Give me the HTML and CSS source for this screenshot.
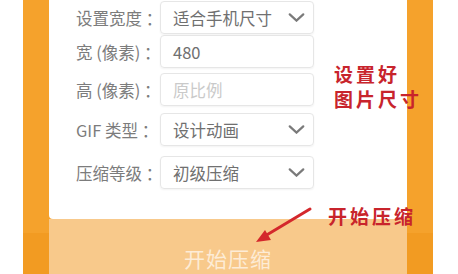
FILE: index.html
```html
<!DOCTYPE html>
<html lang="zh-CN">
<head>
    <meta charset="UTF-8">
    <meta name="viewport" content="width=device-width, initial-scale=1.0">
    <title>GIF 压缩</title>
    <link rel="stylesheet" href="styles.css">
</head>
<body>
    <div class="phone">
        <div class="card">
            <div class="row row-1">
                <span class="label">设置宽度 ：</span>
                <div class="field select">
                    <span>适合手机尺寸</span>
                    <svg class="chevron" viewBox="0 0 18 10"><path d="M1.5 1.5 L9 8.5 L16.5 1.5"/></svg>
                </div>
            </div>
            <div class="row row-2">
                <span class="label">宽 (像素) ：</span>
                <div class="field"><span>480</span></div>
            </div>
            <div class="row row-3">
                <span class="label">高 (像素) ：</span>
                <div class="field"><span class="placeholder">原比例</span></div>
            </div>
            <div class="row row-4">
                <span class="label">GIF 类型 ：</span>
                <div class="field select">
                    <span>设计动画</span>
                    <svg class="chevron" viewBox="0 0 18 10"><path d="M1.5 1.5 L9 8.5 L16.5 1.5"/></svg>
                </div>
            </div>
            <div class="row row-5">
                <span class="label">压缩等级 ：</span>
                <div class="field select">
                    <span>初级压缩</span>
                    <svg class="chevron" viewBox="0 0 18 10"><path d="M1.5 1.5 L9 8.5 L16.5 1.5"/></svg>
                </div>
            </div>
        </div>
        <div class="submit">开始压缩</div>
    </div>

    <!-- annotations drawn over the screenshot -->
    <div class="note note-size">设置好<br>图片尺寸</div>
    <div class="note note-start">开始压缩</div>
    <svg class="arrow" width="66" height="45" viewBox="0 0 66 45">
        <line x1="60" y1="6" x2="15" y2="33"/>
        <polygon points="6,39 21,37 15,27"/>
    </svg>
</body>
</html>
```

FILE: styles.css
```css
body {
    margin: 0;
    background-color: #ffffff;
    font-family: "Noto Sans CJK SC", "Noto Sans", sans-serif;
    position: relative;
    width: 458px;
    height: 274px;
    overflow: hidden;
}

.phone {
    margin-left: 23px;
    width: 410px;
    height: 274px;
    box-sizing: border-box;
    padding: 0 26px;
    background: linear-gradient(#f5a22c 0, #f5a22c 233px, #f29b22 233px);
    overflow: hidden;
}

.card {
    background-color: #ffffff;
    padding: 1px 0 30px 27px;
    border-radius: 0 0 4px 4px;
}

.row {
    display: flex;
    align-items: center;
}

.row-2 { margin-top: 1px; }
.row-3 { margin-top: 5px; }
.row-4 { margin-top: 7px; }
.row-5 { margin-top: 10px; }

.label {
    width: 84px;
    font-size: 16.5px;
    color: #7c7c7c;
    white-space: nowrap;
}

.field {
    width: 154px;
    height: 33px;
    box-sizing: border-box;
    border: 1px solid #e6e6e6;
    border-radius: 4px;
    box-shadow: 0 1px 2px rgba(0,0,0,0.05);
    display: flex;
    align-items: center;
    justify-content: space-between;
    padding: 0 8px 0 12px;
    font-size: 16.5px;
    color: #707070;
}

.placeholder {
    color: #cacaca;
}

.chevron {
    width: 17px;
    height: 9px;
    fill: none;
    stroke: #7a7a7a;
    stroke-width: 2.4;
    stroke-linecap: round;
}

.submit {
    height: 78px;
    background-color: #f8c98b;
    display: flex;
    align-items: center;
    justify-content: center;
    font-size: 21px;
    letter-spacing: 1px;
    color: #fdecd6;
}

.note {
    position: absolute;
    color: #c8242c;
    font-size: 19px;
    font-weight: bold;
    letter-spacing: 3px;
    line-height: 25px;
}

.note-size {
    left: 334px;
    top: 61px;
}

.note-start {
    left: 328px;
    top: 203px;
}

.arrow {
    position: absolute;
    left: 250px;
    top: 203px;
}

.arrow line {
    stroke: #d4282c;
    stroke-width: 3;
    stroke-linecap: round;
}

.arrow polygon {
    fill: #d4282c;
}
```
